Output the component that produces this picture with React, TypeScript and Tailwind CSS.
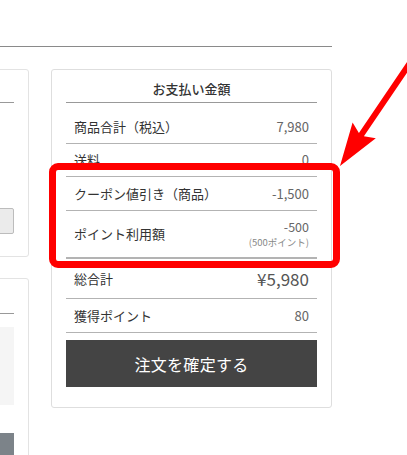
import React from "react";

const FONT = { fontFamily: '"Noto Sans CJK JP", "Noto Sans", sans-serif' };

type Row = { label: string; value: React.ReactNode; h: string; extra?: string };

const ROWS: Row[] = [
  { label: "商品合計（税込）", value: "7,980", h: "h-[34px] mt-[7px]" },
  { label: "送料", value: "0", h: "h-[33px]" },
  { label: "クーポン値引き（商品）", value: "-1,500", h: "h-[34px]" },
  {
    label: "ポイント利用額",
    value: (
      <div className="flex flex-col items-end">
        <span className="text-[12.5px] leading-[15px] text-[#666]">-500</span>
        <span className="mt-[1px] text-[9.5px] leading-[15px] text-[#888]">(500ポイント)</span>
      </div>
    ),
    h: "h-[48px]",
    extra: "border-b-2",
  },
  {
    label: "総合計",
    value: <span className="text-[17px] text-[#555]">¥5,980</span>,
    h: "h-[40px]",
  },
  { label: "獲得ポイント", value: "80", h: "h-[34px]" },
];

function SummaryRow({ row }: { row: Row }) {
  return (
    <div
      className={`flex items-center justify-between px-2 border-[#b3b3b3] ${row.extra ?? "border-b"} ${row.h}`}
    >
      <span className="text-[13px] text-[#333]">{row.label}</span>
      {typeof row.value === "string" ? (
        <span className="text-[13px] text-[#666]">{row.value}</span>
      ) : (
        row.value
      )}
    </div>
  );
}

function Arrow() {
  // tip hidden behind the box corner, shaft exits off the right edge
  return (
    <svg
      className="pointer-events-none absolute left-0 top-0"
      width={407}
      height={455}
      viewBox="0 0 407 455"
    >
      <polygon
        fill="#ff0000"
        points="340,166 352.6,122.5 358.9,132.9 416.2,48.5 421.2,51.9 363.9,136.3 375.8,138.3"
      />
    </svg>
  );
}

export default function App() {
  return (
    <div className="relative h-[455px] w-[407px] overflow-hidden bg-white" style={FONT}>
      <div className="h-[47px] w-[332px] border-b border-[#8a8a8a]" />

      <div className="mt-[22px] flex items-start gap-[22px]">
        {/* left column, mostly off-screen */}
        <div className="-ml-[271px] flex w-[300px] shrink-0 flex-col">
          <div className="h-[188px] rounded-[3px] border border-[#e3e3e3]">
            <div className="mr-[14px] h-[33px] border-b border-[#999]" />
            <div className="mr-[14px] mt-[105px] h-[26px] rounded-[2px] border border-[#bcbcbc] bg-[#ebebeb]" />
          </div>
          <div className="mt-[21px] h-[300px] rounded-[3px] border border-[#e3e3e3]">
            <div className="mr-[14px] h-[35px] border-b border-[#999]" />
            <div className="mr-[14px] mt-[13px] h-[78px] bg-[#f5f5f5]" />
            <div className="mr-[14px] mt-[28px] h-[40px] bg-[#7c8389]" />
          </div>
        </div>

        {/* payment summary */}
        <div className="w-[281px] shrink-0 rounded-[3px] border border-[#dedede] px-[14px] pb-[20px]">
          <div className="h-[33px] border-b border-[#999] pt-[9px] text-center text-[13px] font-medium leading-[20px] text-[#333]">
            お支払い金額
          </div>
          {ROWS.map((r) => (
            <SummaryRow key={r.label} row={r} />
          ))}
          <button className="mt-[7px] flex h-[47px] w-full items-center justify-center bg-[#444] text-[16px] tracking-[0.02em] text-white">
            注文を確定する
          </button>
        </div>
      </div>

      {/* annotation */}
      <div className="pointer-events-none absolute left-[49px] top-[163px] h-[105px] w-[291px] rounded-[9px] border-[7px] border-[#ff0000]" />
      <Arrow />
    </div>
  );
}
